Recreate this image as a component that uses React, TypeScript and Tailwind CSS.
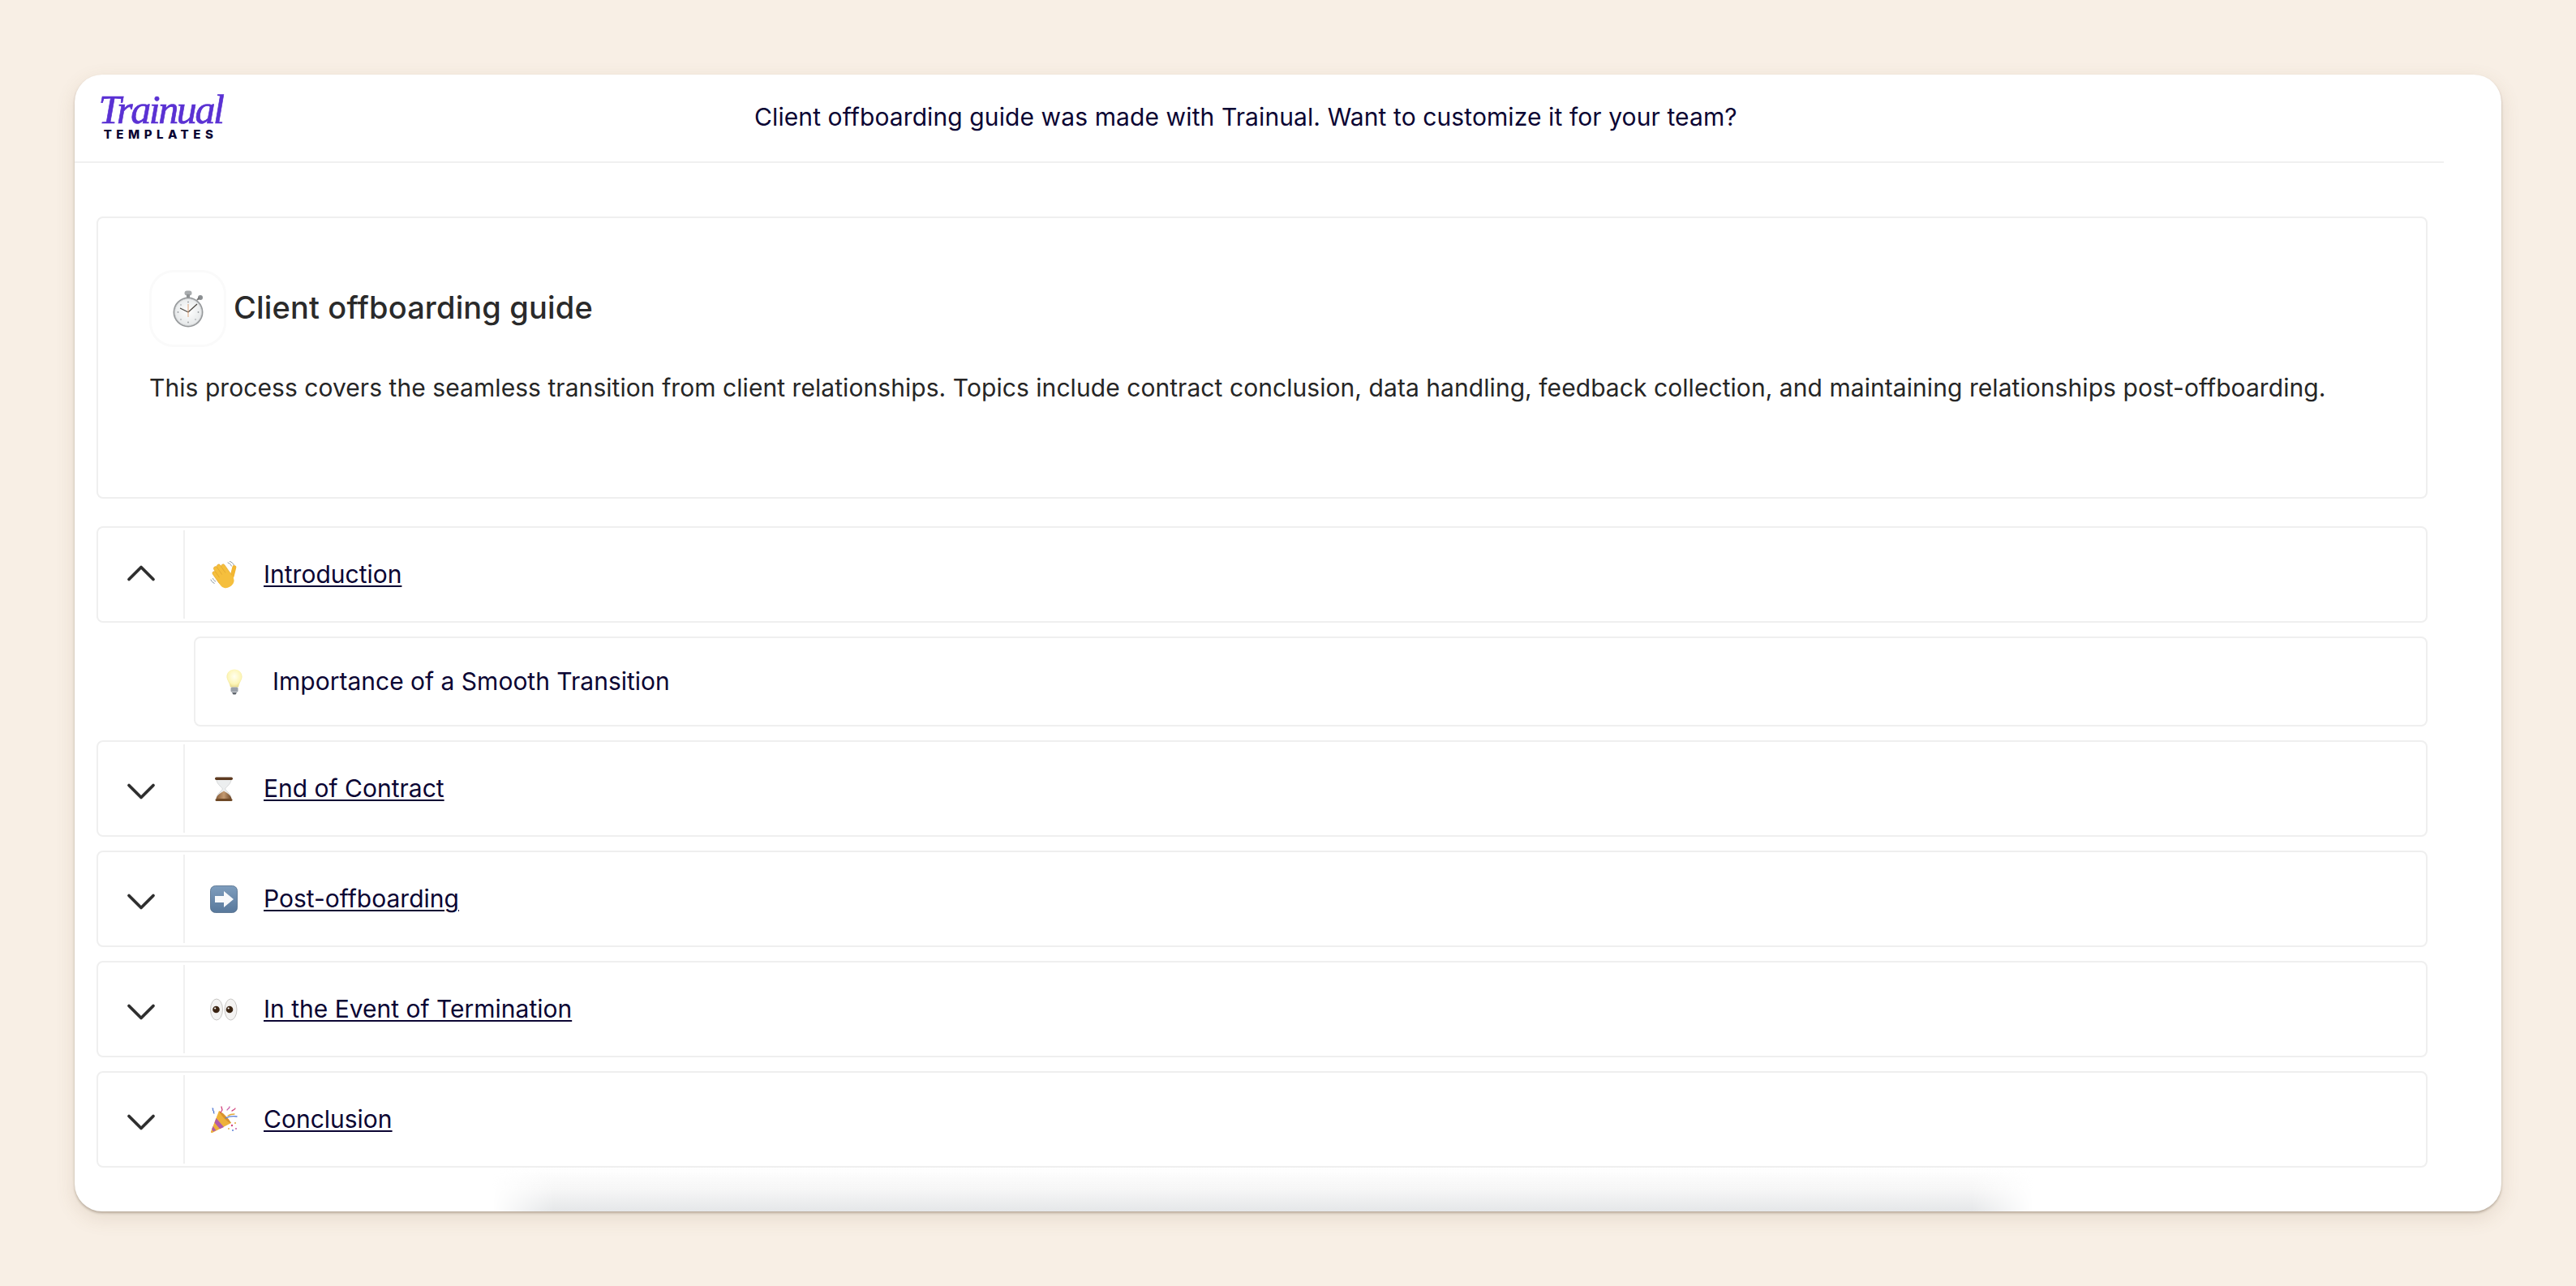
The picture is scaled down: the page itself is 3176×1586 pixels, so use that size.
import { ChevronDown, ChevronUp } from "lucide-react";
import type { ReactNode } from "react";

function Stopwatch() {
  return (
    <svg viewBox="0 0 40 46" className="h-[46px] w-[40px]">
      <defs>
        <radialGradient id="face" cx="50%" cy="45%" r="60%">
          <stop offset="0%" stopColor="#ffffff" />
          <stop offset="100%" stopColor="#e3e6e7" />
        </radialGradient>
      </defs>
      <rect x="15.5" y="0.5" width="9" height="6" rx="3" fill="#a9acae" />
      <rect x="18" y="5" width="4" height="4" fill="#8d9092" />
      <circle cx="35" cy="9" r="3" fill="#8b8f92" />
      <path d="M31 12l3-3" stroke="#777" strokeWidth="2" />
      <circle cx="20" cy="27" r="18.5" fill="#96999b" />
      <circle cx="20" cy="27" r="16.5" fill="url(#face)" stroke="#cdcfd1" strokeWidth="1" />
      <g fill="#9a9ea1">
        <circle cx="20" cy="14.5" r="0.9" />
        <circle cx="20" cy="39.5" r="0.9" />
        <circle cx="7.5" cy="27" r="0.9" />
        <circle cx="32.5" cy="27" r="0.9" />
        <circle cx="11" cy="18" r="0.8" />
        <circle cx="29" cy="36" r="0.8" />
        <circle cx="11" cy="36" r="0.8" />
      </g>
      <path d="M20 27L10 22" stroke="#4b4640" strokeWidth="1.2" />
      <path d="M20 27L31 17" stroke="#4b4640" strokeWidth="1.2" />
      <path d="M20 17V33" stroke="#d99a6c" strokeWidth="0.9" />
    </svg>
  );
}

function Wave() {
  return (
    <svg viewBox="0 0 34 34" className="h-[34px] w-[34px]">
      <g fill="none" stroke="#7d8b96" strokeWidth="0.9" strokeLinecap="round">
        <path d="M22 2c2 .6 3.600 2 4.400 4" />
        <path d="M24.500 .5c2.400.8 4 2.200 5 4.500" />
        <path d="M1 23c.8 2 2.200 3.500 4.200 4.300" />
        <path d="M3.500 21.500c.6 1.600 1.600 2.800 3.200 3.500" />
      </g>
      <rect x="26" y="5" width="5" height="16" rx="2.500" transform="rotate(14 28.500 13)" fill="#f2b632" />
      <g transform="rotate(-35 19 22)" fill="#f5bf3d" stroke="#dd9d22" strokeWidth="0.5">
        <rect x="9.500" y="6" width="4.600" height="18" rx="2.300" />
        <rect x="14" y="2" width="4.800" height="20" rx="2.400" />
        <rect x="18.700" y="2" width="4.800" height="20" rx="2.400" />
        <rect x="23.400" y="5" width="4.600" height="18" rx="2.300" />
        <rect x="9.500" y="15" width="18.500" height="18" rx="8" stroke="none" />
      </g>
    </svg>
  );
}

function Bulb() {
  return (
    <svg viewBox="0 0 20 32" className="h-[32px] w-[20px]">
      <defs>
        <radialGradient id="glass" cx="50%" cy="40%" r="60%">
          <stop offset="0%" stopColor="#fffff0" />
          <stop offset="70%" stopColor="#fdf6b8" />
          <stop offset="100%" stopColor="#e9dc8e" />
        </radialGradient>
      </defs>
      <path
        d="M10 .5C4.500.5.500 4.500.5 9.500c0 4.500 3.500 7 4.500 13h10c1-6 4.500-8.500 4.500-13C19.500 4.500 15.500.5 10 .5z"
        fill="url(#glass)"
      />
      <rect x="5.500" y="22.500" width="9" height="6" rx="1.500" fill="#9aa0a8" />
      <path d="M7 29h6l-1.500 2.500h-3z" fill="#5f656d" />
    </svg>
  );
}

function Hourglass() {
  return (
    <svg viewBox="0 0 24 32" className="h-[32px] w-[24px]">
      <defs>
        <linearGradient id="sand" x1="0" x2="1" y1="0" y2="0">
          <stop offset="0%" stopColor="#8a5f3a" />
          <stop offset="50%" stopColor="#c39a72" />
          <stop offset="100%" stopColor="#6b4526" />
        </linearGradient>
      </defs>
      <path d="M3 4c0 6 5 8 7.500 12C8 20 3 22 3 28h18c0-6-5-8-7.500-12C16 12 21 10 21 4z" fill="#eceeef" stroke="#c2c4c6" strokeWidth="0.6" />
      <path d="M2.500 28c1-5 6-7 9.500-9.500 3.500 2.500 8.500 4.500 9.500 9.500z" fill="url(#sand)" />
      <rect x="1" y="1.500" width="22" height="3.500" rx="1.700" fill="#5d3a20" />
      <rect x="1.500" y="28" width="21" height="3" rx="1.500" fill="#6e4826" />
    </svg>
  );
}

function ArrowBox() {
  return (
    <svg viewBox="0 0 34 34" className="h-[34px] w-[34px]">
      <defs>
        <linearGradient id="box" x1="0" x2="0" y1="0" y2="1">
          <stop offset="0%" stopColor="#7e9dbd" />
          <stop offset="100%" stopColor="#58789b" />
        </linearGradient>
      </defs>
      <rect x="0.500" y="0.500" width="33" height="33" rx="6" fill="url(#box)" stroke="#4f6b89" strokeWidth="0.8" />
      <path d="M6 13h11V7l12 10-12 10v-6H6z" fill="#f7f9fb" />
    </svg>
  );
}

function Eyes() {
  return (
    <svg viewBox="0 0 34 28" className="h-[28px] w-[34px]">
      <ellipse cx="8" cy="14" rx="7.500" ry="13" fill="#f4f3f2" stroke="#bdbab8" strokeWidth="0.8" />
      <ellipse cx="25.500" cy="14" rx="7.500" ry="13" fill="#f4f3f2" stroke="#bdbab8" strokeWidth="0.8" />
      <circle cx="7.500" cy="14" r="4.300" fill="#3b2412" />
      <circle cx="24" cy="14" r="4.300" fill="#3b2412" />
      <circle cx="6.200" cy="12.500" r="1.100" fill="#fff" />
      <circle cx="22.700" cy="12.500" r="1.100" fill="#fff" />
    </svg>
  );
}

function Party() {
  return (
    <svg viewBox="0 0 34 34" className="h-[34px] w-[34px]">
      <path d="M11 6L1 31.500c-.4 1.200.6 2 1.800 1.500L26 21z" fill="#eeb13a" />
      <path d="M7.500 15L17 26l-5 2.200L5.500 20.500zM3.500 25l3.800 5-3.500 1.600L2.200 28.500z" fill="#b05aa8" />
      <path d="M11 6c3.500 1 12 9 15 15-3 .5-12-8-15-15z" fill="#d9922c" />
      <g fill="none" strokeWidth="1.300" strokeLinecap="round">
        <path d="M3 3c2 .5-1 2 1 3s-1 2 1 3" stroke="#5a7fd6" />
        <path d="M14 1l1 4-2 3" stroke="#d2447c" />
        <path d="M21 5c1-2 3-2 3-4" stroke="#c85fa8" />
        <path d="M27 6c1-1 3-1 4-3" stroke="#d2447c" />
        <path d="M19 15c4-2 8-3 14-2" stroke="#5a7fd6" />
        <path d="M22 12c3-2 5-2 8-2" stroke="#e1a93c" />
      </g>
      <g>
        <circle cx="27" cy="24" r="1.200" fill="#d2447c" />
        <circle cx="31" cy="21" r="1" fill="#e1a93c" />
        <circle cx="28" cy="30" r="1" fill="#5a7fd6" />
        <circle cx="32" cy="28" r="1" fill="#c85fa8" />
        <circle cx="23" cy="28" r="0.900" fill="#e1a93c" />
      </g>
    </svg>
  );
}

const sections: { title: string; icon: ReactNode }[] = [
  { title: "End of Contract", icon: <Hourglass /> },
  { title: "Post-offboarding", icon: <ArrowBox /> },
  { title: "In the Event of Termination", icon: <Eyes /> },
  { title: "Conclusion", icon: <Party /> },
];

function Row({ title, icon, open }: { title: string; icon: ReactNode; open?: boolean }) {
  return (
    <div className="flex h-[119px] items-stretch rounded-[8px] border-2 border-[#efefef] bg-white py-[3px]">
      <div className="flex w-[107px] shrink-0 items-center justify-center border-r-2 border-[#f0f0f0]">
        {open ? (
          <ChevronUp size={60} strokeWidth={1.5} className="-mt-[4px] text-[#2e2e2e]" />
        ) : (
          <ChevronDown size={60} strokeWidth={1.5} className="mt-[6px] text-[#2e2e2e]" />
        )}
      </div>
      <div className="flex items-center">
        <div className="ml-[30px] flex w-[36px] justify-center">{icon}</div>
        <a className="ml-[31px] text-[30px] text-[#0b0533] underline decoration-2 underline-offset-[3px]">{title}</a>
      </div>
    </div>
  );
}

export default function App() {
  return (
    <div className="h-[1586px] w-[3176px] overflow-hidden bg-[#f8efe5] pt-[92px] pl-[92px] [font-family:Inter,'Open_Sans',sans-serif]">
      <div className="relative h-[1402px] w-[2992px] overflow-hidden rounded-[34px] bg-white shadow-[0_2px_3px_rgba(70,50,30,0.3),0_8px_24px_rgba(120,90,60,0.14)]">
        <div className="flex h-[109px] w-[2921px] items-center border-b-2 border-[#f0f0f0] pl-[30px]">
          <div className="flex w-[152px] flex-col items-center pb-[8px]">
            <span className="text-[50px] leading-[48px] tracking-[-2.4px] text-[#5a31d3] italic [-webkit-text-stroke:0.7px_#5a31d3] [font-family:'Liberation_Serif',serif]">
              Trainual
            </span>
            <span className="text-[15px] leading-[14px] font-extrabold tracking-[5.5px] text-[#0b0533]">
              TEMPLATES
            </span>
          </div>
          <p className="-mt-[3px] ml-[656px] text-[30px] tracking-[0.1px] whitespace-nowrap text-[#0b0533]">
            Client offboarding guide was made with Trainual. Want to customize it for your team?
          </p>
        </div>

        <div className="flex w-[2928px] flex-col px-[27px] pt-[66px]">
          <div className="h-[348px] rounded-[8px] border-2 border-[#efefef] px-[63px] pt-[64px]">
            <div className="flex items-center">
              <div className="flex h-[95px] w-[95px] items-center justify-center rounded-[30px] border-[3px] border-[#fafafa]">
                <Stopwatch />
              </div>
              <h1 className="-mt-[3px] ml-[9px] text-[38px] font-medium tracking-[0.15px] text-[#2a2a2a]">
                Client offboarding guide
              </h1>
            </div>
            <p className="mt-[28px] text-[30px] tracking-[0.06px] whitespace-nowrap text-[#262626]">
              This process covers the seamless transition from client relationships. Topics include contract conclusion,
              data handling, feedback collection, and maintaining relationships post-offboarding.
            </p>
          </div>

          <div className="mt-[34px] flex flex-col gap-[17px]">
            <Row title="Introduction" icon={<Wave />} open />
            <div className="ml-[120px] flex h-[111px] items-center rounded-[8px] border-2 border-[#efefef]">
              <div className="ml-[36px] flex w-[24px] justify-center">
                <Bulb />
              </div>
              <span className="ml-[35px] text-[30px] text-[#0b0533]">Importance of a Smooth Transition</span>
            </div>
            {sections.map((s) => (
              <Row key={s.title} title={s.title} icon={s.icon} />
            ))}
          </div>
        </div>

        {/* soft fade along the bottom edge, sits over the last row's margin */}
        <div className="absolute bottom-0 left-[515px] h-[54px] w-[1900px] bg-gradient-to-b from-white/0 via-[#f6f6f6] to-[#e5e7e9] [mask-image:linear-gradient(to_right,transparent,black_4%,black_96%,transparent)]" />
      </div>
    </div>
  );
}
